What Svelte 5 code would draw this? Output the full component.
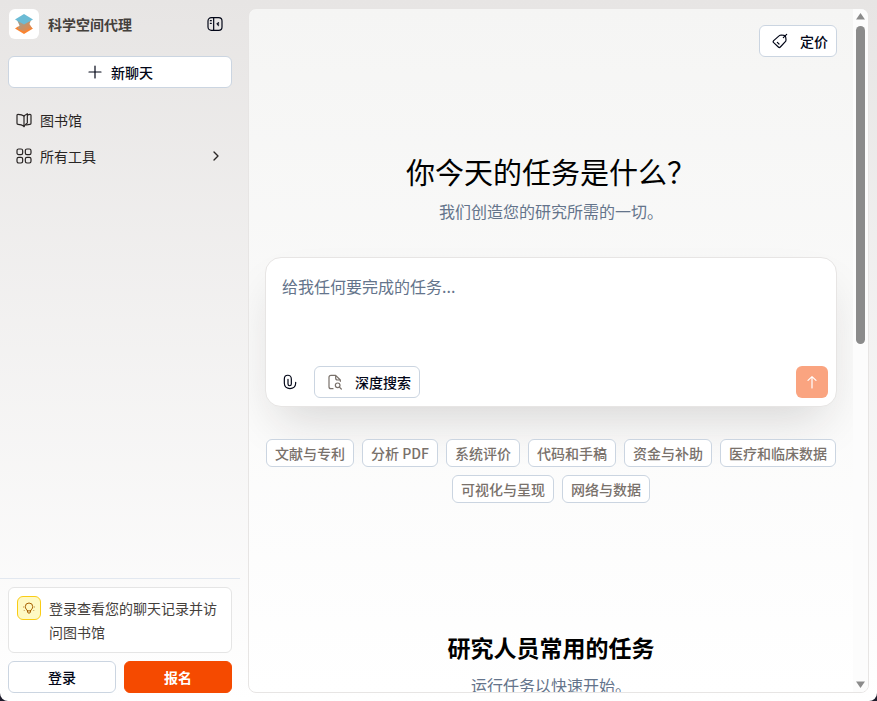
<script lang="ts">
  type Task = { id: string; label: string };

  const tasks: Task[] = [
    { id: 'literature', label: '文献与专利' },
    { id: 'pdf', label: '分析 PDF' },
    { id: 'review', label: '系统评价' },
    { id: 'code', label: '代码和手稿' },
    { id: 'grants', label: '资金与补助' },
    { id: 'clinical', label: '医疗和临床数据' },
    { id: 'visual', label: '可视化与呈现' },
    { id: 'network', label: '网络与数据' }
  ];

  let prompt = $state('');
  let sidebarOpen = $state(true);
</script>

<div class="app">
  <aside class="sidebar" class:collapsed={!sidebarOpen}>
    <header class="brand">
      <a class="brand-link" href="/">
        <span class="logo">
          <svg width="20" height="20" viewBox="0 0 20 20" aria-hidden="true">
            <defs>
              <linearGradient id="fold" x1="0" y1="0" x2="1" y2="1">
                <stop offset="0" stop-color="#8fa5a3" />
                <stop offset="1" stop-color="#f58238" />
              </linearGradient>
            </defs>
            <path d="M1 14.500 4 12.500h12l3 2-9 5.500z" fill="#fb8430" />
            <path d="M3 6h14l-1.500 4 2.500 4-8 3.500-6.500-3 2-3z" fill="url(#fold)" />
            <path d="M10 0 19 5.500 10 10.500 1 5.500z" fill="#6bbbd5" />
          </svg>
        </span>
        <span class="brand-name">科学空间代理</span>
      </a>
      <button class="icon-button" aria-label="切换侧边栏" onclick={() => (sidebarOpen = !sidebarOpen)}>
        <svg class="icon" viewBox="0 0 24 24">
          <rect x="1.500" y="2.500" width="21" height="19" rx="5" />
          <path d="M10 3v18M5 7h1.500M5 11h1.500" />
          <path d="M17 9.500 14.500 12l2.500 2.500z" fill="currentColor" stroke-width="1" />
        </svg>
      </button>
    </header>

    <button class="button new-chat">
      <svg class="icon" viewBox="0 0 24 24"><path d="M12 3v18M3 12h18" /></svg>
      新聊天
    </button>

    <nav class="menu">
      <a class="menu-item" href="/library">
        <svg class="icon" viewBox="0 0 24 24">
          <path d="M12 6v16M12 6C9.500 4 6 3.500 3 3.500c-1 0-1.500.5-1.500 1.500v12c0 1 .5 1.500 1.500 1.500 3.500 0 6.500 1 9 3" />
          <path d="M12 6c1.500-1.500 3-2.500 5-3.500v14c-2 1-3.500 3-5 5M17 5c1.500-1 3-1.500 4-1.500 1 0 1.500.5 1.500 1.500v12c0 1-.5 1.500-1.500 1.500-2 0-4 .5-5.500 1" />
        </svg>
        <span>图书馆</span>
      </a>
      <button class="menu-item">
        <svg class="icon" viewBox="0 0 24 24">
          <rect x="1.500" y="1.500" width="8.500" height="8.500" rx="2.500" />
          <rect x="14" y="1.500" width="8.500" height="8.500" rx="2.500" />
          <rect x="1.500" y="14" width="8.500" height="8.500" rx="2.500" />
          <rect x="14" y="14" width="8.500" height="8.500" rx="2.500" />
        </svg>
        <span>所有工具</span>
        <svg class="icon chevron" viewBox="0 0 24 24"><path d="m9 6 6 6-6 6" /></svg>
      </button>
    </nav>

    <footer class="account">
      <div class="notice">
        <span class="notice-icon">
          <svg viewBox="0 0 24 24">
            <path d="M8.500 17C8 15 4.500 13.500 4.500 9.500a7.500 7.500 0 0 1 15 0c0 4-3.500 5.500-4 7.500zM9 17v3c0 3 6 3 6 0v-3" />
            <path d="M1 10h.5M22.500 10h.5M2.500 17l.5-.5M21.500 17l-.5-.5" stroke-width="1.500" />
          </svg>
        </span>
        <p>登录查看您的聊天记录并访问图书馆</p>
      </div>
      <div class="account-actions">
        <button class="button">登录</button>
        <button class="button primary">报名</button>
      </div>
    </footer>
  </aside>

  <main class="panel">
    <div class="content">
      <div class="topbar">
        <button class="button with-icon">
          <svg class="icon" viewBox="0 0 24 24">
            <path d="M2.500 11.500 11 4c1-1 2-1 3-1l4 .500c1.500.200 2.300 1 2.500 2.500l.500 4c0 1.500 0 2-1 3l-7.500 8c-1 1-2 1-3 0l-7-6.500c-1-1-1-2 0-3z" />
            <path d="m17 7 5-5M8 14l2.500 2.500" />
          </svg>
          定价
        </button>
      </div>

      <section class="hero">
        <h1>你今天的任务是什么？</h1>
        <p>我们创造您的研究所需的一切。</p>
      </section>

      <form class="composer" onsubmit={(e) => e.preventDefault()}>
        <textarea aria-label="任务" placeholder="给我任何要完成的任务..." bind:value={prompt}></textarea>
        <div class="composer-actions">
          <button type="button" class="icon-button" aria-label="添加附件">
            <svg class="icon" viewBox="0 0 24 24">
              <path d="M9 8v7c0 3.500 5 3.500 5 0V7.500c0-7.500-10.500-7.500-10.500 0V14c0 10.500 17 10.500 17 0v-1.500" />
            </svg>
          </button>
          <button type="button" class="button with-icon deep-search">
            <svg class="icon" viewBox="0 0 24 24">
              <path d="M9 22H6c-1.500 0-3-1-3-3V5c0-2 1-3 3-3h7l7 7v2M13 2v4c0 2 1 3 3 3h4" />
              <circle cx="16" cy="17" r="3.500" />
              <path d="m19 20 2.500 2.500" />
            </svg>
            深度搜索
          </button>
          <button type="submit" class="send" aria-label="发送">
            <svg class="icon" viewBox="0 0 24 24"><path d="M12 21V4M6 9.500 12 4l6 5.500" /></svg>
          </button>
        </div>
      </form>

      <div class="tasks">
        {#each tasks as task (task.id)}
          <button class="chip">{task.label}</button>
        {/each}
      </div>

      <section class="popular">
        <h2>研究人员常用的任务</h2>
        <p>运行任务以快速开始。</p>
      </section>
    </div>

    <div class="scrollbar" aria-hidden="true">
      <svg width="9" height="7" viewBox="0 0 9 7"><path d="M4.500 0 9 6.500H0z" /></svg>
      <div class="track"><div class="thumb"></div></div>
      <svg width="9" height="7" viewBox="0 0 9 7"><path d="M0 .500h9L4.500 7z" /></svg>
    </div>
  </main>
</div>

<style>
  :global(body) {
    margin: 0;
    background: #1e1b2b;
  }

  .app {
    display: flex;
    gap: 8px;
    height: 100vh;
    box-sizing: border-box;
    padding: 8px 8px 8px 0;
    overflow: hidden;
    border-radius: 0 0 8px 8px;
    background: linear-gradient(#e7e5e4, #ffffff);
    font-family: "Noto Sans CJK SC", "Noto Sans", sans-serif;
    font-size: 14px;
    line-height: 19px;
    color: #020617;
  }

  .app * {
    box-sizing: border-box;
  }

  h1,
  h2,
  p {
    margin: 0;
  }

  a {
    color: inherit;
    text-decoration: none;
  }

  button {
    margin: 0;
    padding: 0;
    border: 0;
    background: none;
    font: inherit;
    color: inherit;
    cursor: pointer;
  }

  .icon {
    width: 16px;
    height: 16px;
    flex-shrink: 0;
    fill: none;
    stroke: currentColor;
    stroke-width: 1.8;
    stroke-linecap: round;
    stroke-linejoin: round;
  }

  .button {
    display: flex;
    align-items: center;
    justify-content: center;
    height: 32px;
    border: 1px solid #cbd5e1;
    border-radius: 6px;
    background: #ffffff;
    font-weight: 500;
  }

  .button.primary {
    border-color: #f54a00;
    background: #f54a00;
    color: #ffffff;
    font-weight: 700;
  }

  .button.with-icon {
    gap: 12px;
    padding: 0 8px 0 12px;
  }

  .icon-button {
    display: flex;
    align-items: center;
    justify-content: center;
    width: 32px;
    height: 32px;
  }

  /* Sidebar */
  .sidebar {
    display: flex;
    flex-direction: column;
    width: 240px;
    flex-shrink: 0;
  }

  .sidebar.collapsed {
    display: none;
  }

  .brand {
    display: flex;
    align-items: center;
    justify-content: space-between;
    height: 32px;
    padding: 0 9px;
  }

  .brand-link {
    display: flex;
    align-items: center;
    gap: 9px;
  }

  .logo {
    display: flex;
    align-items: center;
    justify-content: center;
    width: 30px;
    height: 30px;
    border-radius: 6px;
    background: #ffffff;
  }

  .brand-name {
    color: #44403c;
    font-weight: 700;
  }

  .new-chat {
    gap: 8px;
    margin: 16px 8px;
  }

  .menu {
    display: flex;
    flex-direction: column;
    gap: 4px;
    padding: 0 8px;
    color: #292524;
  }

  .menu-item {
    display: flex;
    align-items: center;
    gap: 8px;
    height: 32px;
    padding: 0 8px;
  }

  .menu-item .chevron {
    margin-left: auto;
    stroke-width: 2;
  }

  .account {
    display: flex;
    flex-direction: column;
    gap: 8px;
    margin-top: auto;
    padding: 8px 8px 0;
    border-top: 1px solid #e2e8f0;
  }

  .notice {
    display: flex;
    gap: 8px;
    padding: 8px;
    border: 1px solid #e5e5e5;
    border-radius: 6px;
    background: #ffffff;
    color: #44403c;
    line-height: 24px;
  }

  .notice-icon {
    display: flex;
    align-items: center;
    justify-content: center;
    width: 24px;
    height: 24px;
    flex-shrink: 0;
    border: 1px solid #facc15;
    border-radius: 6px;
    background: #fef9c3;
  }

  .notice-icon svg {
    width: 12px;
    height: 12px;
    fill: none;
    stroke: #a65f00;
    stroke-width: 2;
    stroke-linecap: round;
    stroke-linejoin: round;
  }

  .account-actions {
    display: grid;
    grid-template-columns: 1fr 1fr;
    gap: 8px;
  }

  /* Main panel */
  .panel {
    display: flex;
    flex: 1;
    min-width: 0;
    overflow: hidden;
    border: 1px solid #e7e5e4;
    border-radius: 8px;
    background: linear-gradient(#f5f5f4, #ffffff);
  }

  .content {
    flex: 1;
    min-width: 0;
    padding: 16px;
    overflow: hidden;
  }

  .topbar {
    display: flex;
    justify-content: flex-end;
  }

  .hero {
    margin-top: 94px;
    text-align: center;
  }

  .hero h1 {
    color: #000000;
    font-size: 29px;
    font-weight: 400;
    line-height: 40px;
  }

  .hero p,
  .popular p {
    margin-top: 8px;
    color: #64748b;
    font-size: 16px;
    line-height: 24px;
  }

  .composer {
    display: flex;
    flex-direction: column;
    gap: 8px;
    margin-top: 34px;
    padding: 8px;
    border: 1px solid #e7e5e4;
    border-radius: 16px;
    background: #ffffff;
    box-shadow: 0 24px 48px -12px rgba(28, 25, 23, 0.16);
  }

  textarea {
    display: block;
    width: 100%;
    height: 92px;
    padding: 8px;
    border: 0;
    outline: 0;
    resize: none;
    background: transparent;
    color: #020617;
    font: inherit;
    font-size: 16px;
    line-height: 24px;
  }

  textarea::placeholder {
    color: #64748b;
    opacity: 1;
  }

  .composer-actions {
    display: flex;
    align-items: center;
    gap: 8px;
  }

  .deep-search .icon {
    color: #79716b;
  }

  .send {
    display: flex;
    align-items: center;
    justify-content: center;
    width: 32px;
    height: 32px;
    margin-left: auto;
    border-radius: 6px;
    background: #faa480;
    color: #ffffff;
  }

  .tasks {
    display: flex;
    flex-wrap: wrap;
    justify-content: center;
    gap: 8px;
    margin-top: 32px;
  }

  .chip {
    height: 28px;
    padding: 0 8px;
    border: 1px solid #cbd5e1;
    border-radius: 6px;
    background: #ffffff;
    color: #79716b;
    font-weight: 500;
  }

  .popular {
    margin-top: 128px;
    text-align: center;
  }

  .popular h2 {
    color: #000000;
    font-size: 23px;
    font-weight: 700;
    line-height: 32px;
  }

  .popular p {
    margin-top: 10px;
  }

  .scrollbar {
    display: flex;
    flex-direction: column;
    align-items: center;
    gap: 6px;
    width: 15px;
    padding: 4px 0;
    background: #fcfcfc;
    fill: #8b8b8b;
  }

  .track {
    flex: 1;
    width: 9px;
  }

  .thumb {
    height: 49%;
    border-radius: 5px;
    background: #8b8b8b;
  }
</style>
